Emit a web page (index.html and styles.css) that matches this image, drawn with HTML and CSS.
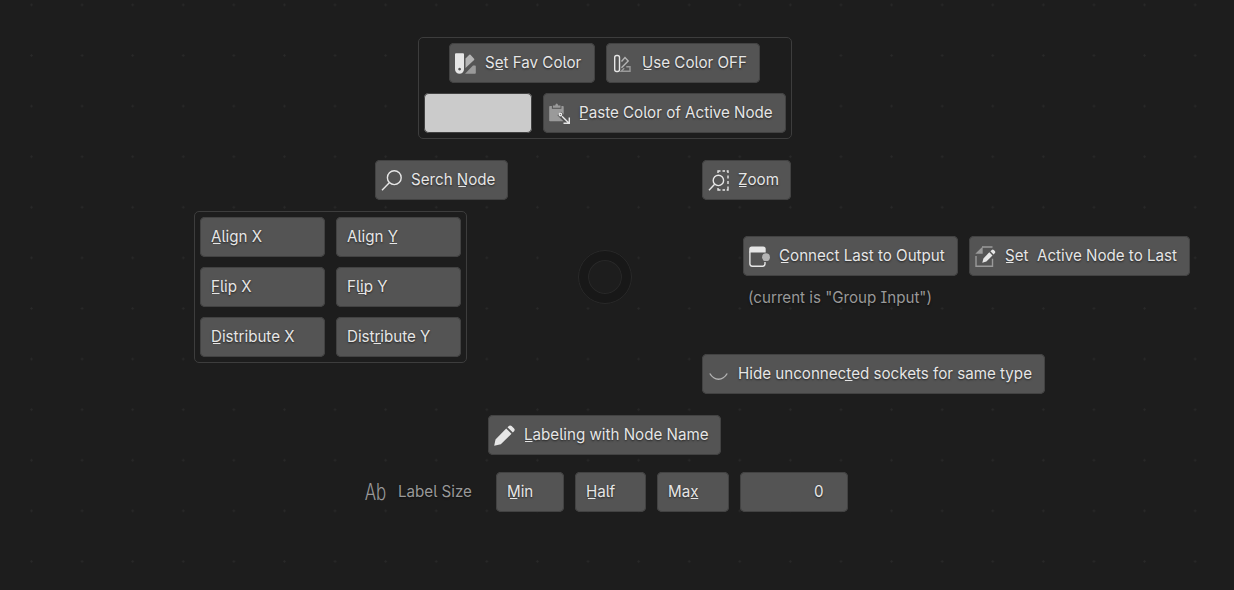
FILE: index.html
```
<!DOCTYPE html>
<html lang="en">
<head>
<meta charset="utf-8">
<title>Node Pie Menu</title>
<link rel="stylesheet" href="styles.css">
</head>
<body>
<main class="canvas">
  <section class="panel color-panel">
    <div class="row fav-row">
      <button class="btn w-fav"><svg class="icon" viewBox="0 0 36 40"><path class="hi" fill-rule="evenodd" d="M6 11.2q0-1 1-1h7q1 0 1 1V26.3a4.5 4.5 0 0 1-9 0zM10.6 24.7a1.4 1.4 0 1 0 .01 0z"/><path class="mid" d="M16.5 15.6 20.3 11.8q.6-.6 1.2 0l3.6 4q.5.6 0 1.2L16.5 25z"/><path class="low" d="M16 30.7 24 22.6h2q.8 0 .8.8v6.500q0 .8-.8.8z"/></svg><span class="label">S<u>e</u>t Fav Color</span></button>
      <button class="btn w-use"><svg class="icon line" viewBox="0 0 36 40"><rect class="s-hi" x="8.700" y="12.500" width="4.800" height="16" rx="2"/><path class="s-mid" d="M15.500 18.500 19 14.600 22.200 17.900 15.500 24.700"/><path class="s-low" d="M20.300 23.700h3.700v4.500h-8.800l3-3"/></svg><span class="label"><u>U</u>se Color OFF</span></button>
    </div>
    <div class="row">
      <button class="btn swatch" aria-label="Favorite color"></button>
      <button class="btn w-paste"><svg class="icon" viewBox="0 0 36 40"><path class="low" d="M7 13h12.900q.8 0 .8.800v14.500H7q-.8 0-.8-.8V13.800q0-.8.8-.8z"/><path class="clip" d="M8.900 12.500h9.500v3.300H8.900z"/><path class="low" d="M9.900 14.700v-2.200h2.300l.6-1.500q.9-1 1.800 0l.6 1.500h2.300v2.200z"/><path class="halo" d="M16.200 20.400 25.800 30"/><path class="s-hi" d="M19 23.200 25.800 30M26.300 24.500v5.800h-5.800"/><circle class="s-hi" cx="17.400" cy="21.500" r="1.200"/></svg><span class="label"><u>P</u>aste Color of Active Node</span></button>
    </div>
  </section>

  <div class="row tools-row">
    <button class="btn w-search"><svg class="icon line" viewBox="0 0 36 40"><circle class="s-hi" cx="19.300" cy="17.700" r="6.900"/><path class="s-hi" d="m14.300 22.700-7.300 7.500"/></svg><span class="label">Serch <u>N</u>ode</span></button>
    <button class="btn w-zoom"><svg class="icon line" viewBox="0 0 36 40"><circle class="s-hi" cx="16.400" cy="20.400" r="5.200"/><path class="s-hi" d="m12.600 24.200-5.600 6M16 13v-2h2.500M20.500 11H23M24.700 11h1.300v2M26 15.500v3M26 21v3M26 26.500v3.500h-1.300M23 30h-2.500M18.500 30H16v-2"/></svg><span class="label"><u>Z</u>oom</span></button>
  </div>

  <div class="middle">
    <section class="panel align-panel">
      <button class="btn"><span class="label"><u>A</u>lign X</span></button>
      <button class="btn"><span class="label">Align <u>Y</u></span></button>
      <button class="btn"><span class="label"><u>F</u>lip X</span></button>
      <button class="btn"><span class="label">Fl<u>i</u>p Y</span></button>
      <button class="btn"><span class="label"><u>D</u>istribute X</span></button>
      <button class="btn"><span class="label">Dist<u>r</u>ibute Y</span></button>
    </section>
    <div class="ring"></div>
    <div class="outputs">
      <div class="row output-row">
        <button class="btn w-connect"><svg class="icon line" viewBox="0 0 36 40"><path class="hi" d="M6.200 16.500V13q0-2.500 2.500-2.500h11.500q2.500 0 2.500 2.500v3.500z"/><path class="s-hi" d="M6.900 15.500v12.300q0 2.400 2.400 2.400h10.300q2.400 0 2.400-2.400v-1.800"/><circle class="mid" cx="23" cy="21.200" r="3.900"/></svg><span class="label"><u>C</u>onnect Last to Output</span></button>
        <button class="btn w-last"><svg class="icon line" viewBox="0 0 36 40"><path class="low" d="M6.300 17.700 13.700 10.400v7.300z"/><path class="s-low" d="M13 11h10.500M7 20v10.200h16.500v-7.500"/><path class="hi" d="M13.300 26.800 14.400 22.500 20.300 16.300 23.500 19.500 17.400 25.600zM21.400 15.200l1.400-1.300q1-.7 2 .2l1 1q.9 1 .1 2l-1.300 1.300z"/></svg><span class="label"><u>S</u>et&nbsp; Active Node to Last</span></button>
      </div>
      <p class="label note">(current is "Group Input")</p>
      <button class="btn w-hide"><svg class="icon line" viewBox="0 0 36 40"><path class="s-mid" d="M7.800 19.500q3.500 5.800 8.700 5.800t8.700-5.800"/></svg><span class="label">Hide unconnec<u>t</u>ed sockets for same type</span></button>
    </div>
  </div>

  <button class="btn w-name"><svg class="icon" viewBox="0 0 36 40"><path class="hi" d="M6.200 30.700 7.500 24.500 18.200 13.500 23.500 18.800 12.800 29.200zM19.500 12.300l1.700-1.500q1.200-.9 2.400.2l2.500 2.500q1.100 1.200.2 2.400l-1.500 1.700z"/></svg><span class="label"><u>L</u>abeling with Node Name</span></button>

  <div class="row size-row">
    <div class="size-label"><span class="ab">Ab</span><span class="label">Label Size</span></div>
    <button class="btn w-min"><span class="label"><u>M</u>in</span></button>
    <button class="btn w-half"><span class="label"><u>H</u>alf</span></button>
    <button class="btn w-max"><span class="label">Ma<u>x</u></span></button>
    <button class="btn w-num"><span class="label">0</span></button>
  </div>
</main>
</body>
</html>
```
FILE: styles.css
```
* { box-sizing: border-box; }
body { margin: 0; background: #1d1d1d; }
.canvas {
  width: 1234px;
  height: 590px;
  padding-top: 37px;
  overflow: hidden;
  display: flex;
  flex-direction: column;
  align-items: flex-start;
  font-family: Inter, "Liberation Sans", sans-serif;
  font-size: 16px;
  color: #e6e6e6;
  background: radial-gradient(circle at 50% 50%, #292929 0, #292929 .8px, transparent 1.5px) 6.200px -20.400px / 50.600px 50.600px #1d1d1d;
}
.row { display: flex; gap: 11px; }
.panel { border: 1px solid #3d3d3d; border-radius: 5px; background: #1d1d1d; }
.btn {
  flex: none;
  display: flex;
  align-items: center;
  height: 40px;
  padding: 0 0 0 11px;
  border: 0;
  border-radius: 5px;
  background: #545454;
  box-shadow: inset 0 0 0 1px #424242;
  color: #e6e6e6;
  font: inherit;
  text-align: left;
}
.btn:has(.icon) { padding-left: 0; }
.label {
  white-space: pre;
  line-height: 20px;
  font-feature-settings: "cv05", "cv08";
  text-shadow: 0 1px 2px rgba(0, 0, 0, .6);
  transform: scaleX(.946);
  transform-origin: 0 50%;
}
.btn .label { margin-top: -3px; }
.label u { position: relative; text-decoration: none; }
.label u::after {
  content: "";
  position: absolute;
  left: calc(50% - 4px);
  bottom: 2px;
  width: 8px;
  height: 1px;
  background: #e6e6e6;
}
.icon { width: 36px; height: 40px; flex: none; }
.hi { fill: #e6e6e6; }
.mid { fill: #b4b4b4; }
.low { fill: #9a9a9a; }
.clip { fill: #545454; }
.s-hi, .s-mid, .s-low { fill: none; stroke-width: 1.4; }
.s-hi { stroke: #e6e6e6; }
.s-mid { stroke: #b4b4b4; }
.s-low { stroke: #9a9a9a; }
.halo { fill: none; stroke: #545454; stroke-width: 5; }

.color-panel {
  width: 374px;
  height: 102px;
  margin-left: 418px;
  padding: 5px;
  display: flex;
  flex-direction: column;
  gap: 10px;
}
.fav-row { padding-left: 25px; }
.btn.swatch { width: 108px; background: #cbcbcb; }
.w-fav { width: 146px; }
.w-use { width: 154px; }
.w-paste { width: 243px; }
.w-search { width: 133px; }
.w-zoom { width: 89px; }
.tools-row { margin: 21px 0 0 375px; gap: 194px; }

.middle { display: flex; margin: 11px 0 0 194px; }
.align-panel {
  width: 273px;
  height: 152px;
  padding: 5px;
  display: grid;
  grid-template-columns: 125px 125px;
  grid-auto-rows: 40px;
  gap: 10px 11px;
}
.ring {
  width: 54px;
  height: 54px;
  margin: 39px 0 0 111px;
  border: 10px solid #181818;
  border-radius: 50%;
  outline: 1px solid #292929;
  outline-offset: -1px;
  box-shadow: inset 0 0 0 1px #292929;
}
.outputs { margin-left: 70px; padding-top: 25px; display: flex; flex-direction: column; align-items: flex-start; }
.output-row { margin-left: 41px; }
.w-connect { width: 215px; }
.w-last { width: 221px; }
.note { margin: 11px 0 47px 46px; color: #999; }
.w-hide { width: 343px; }
.w-name { width: 233px; margin: 21px 0 0 488px; }
.size-row { margin: 17px 0 0 364px; }
.size-label { display: flex; align-items: center; width: 121px; color: #999; }
.ab {
  width: 34px;
  line-height: 40px;
  font-size: 22.500px;
  font-weight: 300;
  transform: scaleX(.75);
  transform-origin: 0 50%;
  padding-left: 1px;
}
.size-label .label { margin-top: -3px; }
.w-min { width: 68px; }
.w-half { width: 71px; }
.w-max { width: 72px; }
.w-num { width: 108px; justify-content: flex-end; padding-right: 24px; }
```
